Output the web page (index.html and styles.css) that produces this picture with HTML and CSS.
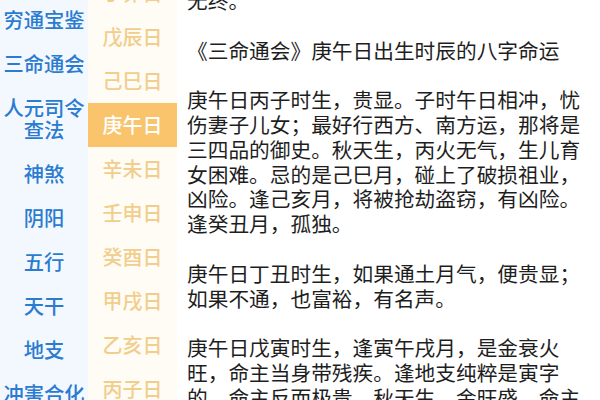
FILE: index.html
```html
<!DOCTYPE html>
<html lang="zh-CN">
<head>
    <meta charset="UTF-8">
    <meta name="viewport" content="width=device-width, initial-scale=1.0">
    <title>庚午日</title>
    <link rel="stylesheet" href="styles.css">
</head>
<body>

<div class="page">
    <ul class="books">
        <li>穷通宝鉴</li>
        <li>三命通会</li>
        <li>人元司令<br>查法</li>
        <li>神煞</li>
        <li>阴阳</li>
        <li>五行</li>
        <li>天干</li>
        <li>地支</li>
        <li>冲害合化</li>
    </ul>
    <ul class="days">
        <li>丁卯日</li>
        <li>戊辰日</li>
        <li>己巳日</li>
        <li class="active">庚午日</li>
        <li>辛未日</li>
        <li>壬申日</li>
        <li>癸酉日</li>
        <li>甲戌日</li>
        <li>乙亥日</li>
        <li>丙子日</li>
    </ul>
    <div class="article">
        <p>无终。</p>
        <p>《三命通会》庚午日出生时辰的八字命运</p>
        <p>庚午日丙子时生，贵显。子时午日相冲，忧伤妻子儿女；最好行西方、南方运，那将是三四品的御史。秋天生，丙火无气，生儿育女困难。忌的是己巳月，碰上了破损祖业，凶险。逢己亥月，将被抢劫盗窃，有凶险。逢癸丑月，孤独。</p>
        <p>庚午日丁丑时生，如果通土月气，便贵显；如果不通，也富裕，有名声。</p>
        <p>庚午日戊寅时生，逢寅午戌月，是金衰火旺，命主当身带残疾。逢地支纯粹是寅字的，命主反而极贵。秋天生，金旺盛，命主富贵。</p>
    </div>
</div>

</body>
</html>
```

FILE: styles.css
```css
body {
    margin: 0;
    font-family: "Noto Sans CJK SC", "Noto Sans", sans-serif;
    background-color: #fff;
}
.page {
    display: flex;
    width: 600px;
    height: 400px;
    overflow: hidden;
}
.books,
.days {
    list-style: none;
    margin: 0;
    padding: 0;
    flex-shrink: 0;
}
.books {
    width: 88px;
    background-color: #f3f8fe;
}
.books li {
    padding: 11px 0;
    line-height: 22px;
    font-size: 20.3px;
    font-weight: 500;
    color: #2b7bd1;
    text-align: center;
    white-space: nowrap;
}
.books li:first-child {
    margin-top: -3px;
}
.days {
    width: 89px;
    background-color: #fffcf5;
}
.days li {
    height: 44px;
    line-height: 44px;
    font-size: 20px;
    font-weight: 500;
    color: #f1ce8c;
    text-align: center;
}
.days li:first-child {
    margin-top: -29px;
}
.days li.active {
    background-color: #f9c46c;
    color: #fff;
}
.article {
    flex: 1;
    padding: 0 5px 0 10px;
    margin-top: -12px;
    font-size: 20.7px;
    line-height: 24.8px;
    color: #1e1e1e;
}
.article p {
    margin: 0 0 24.8px;
}
```
